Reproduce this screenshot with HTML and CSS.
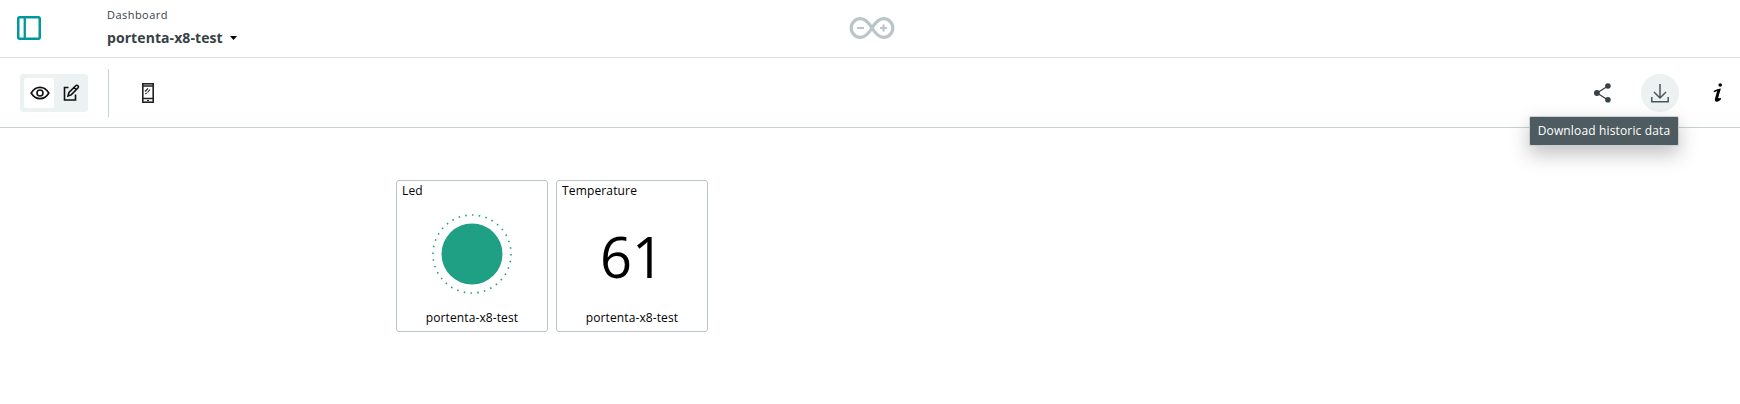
FILE: index.html
```html
<!DOCTYPE html>
<html lang="en">
<head>
<meta charset="utf-8">
<title>portenta-x8-test</title>
<link rel="stylesheet" href="styles.css">
</head>
<body>
<header class="header">
  <div class="header-left">
    <svg class="menu-icon" width="24" height="24" viewBox="0 0 24 24" fill="none" stroke="#00979d"><rect x="1.250" y="1.250" width="21.500" height="21.500" rx="1.500" stroke-width="2.500"/><path d="M7.750 2v20" stroke-width="2.300"/></svg>
    <div class="crumbs">
      <span class="crumb">Dashboard</span>
      <div class="title"><span>portenta-x8-test</span><svg width="7" height="4" viewBox="0 0 7 4"><path d="M0 0h7L3.500 4z"/></svg></div>
    </div>
  </div>
  <svg class="logo" width="46" height="22" viewBox="0 0 46 22" fill="none" stroke="#b9c5c6" stroke-width="3.200"><path d="M23 11C19 4.500 15.500 1.700 11.500 1.700a9.300 9.300 0 0 0 0 18.600C15.500 20.300 19 17.500 23 11S30.500 1.700 34.500 1.700a9.300 9.300 0 0 1 0 18.600C30.500 20.300 27 17.500 23 11z"/><path d="M8 11h7M31 11h7M34.500 7.500v7" stroke-width="2.200"/></svg>
</header>
<nav class="toolbar">
  <div class="tools">
    <div class="modes">
      <span class="mode mode-active"><svg width="20" height="16" viewBox="0 0 20 16" fill="none" stroke="#111" stroke-width="1.600"><path d="M1.200 8C3.500 4 6.500 2.400 10 2.400S16.500 4 18.800 8C16.500 12 13.500 13.600 10 13.600S3.500 12 1.200 8z"/><circle cx="10" cy="8" r="3"/></svg></span>
      <span class="mode"><svg width="18" height="18" viewBox="0 0 18 18" fill="none" stroke="#111" stroke-width="1.600"><path d="M6.500 3.500H2.500v12.500h11v-5.500"/><path d="M6 12l1-3.500 6.700-6.700c.7-.7 1.700-.6 2.200 0 .6.600.6 1.500 0 2.200L9.200 10.900zM12 3.500l2.300 2.300"/></svg></span>
    </div>
    <span class="divider"></span>
    <svg class="phone" width="12" height="20" viewBox="0 0 12 20" fill="none" stroke="#222"><rect x=".8" y=".8" width="10.400" height="18.400" stroke-width="1.600"/><path d="M1 3h10M1 15.400h10" stroke-width="1.500"/><path d="M3 8.500l3-3M3.500 11l1.200-1.200M5.500 9.500l2.500-3" stroke-width="1.100"/><path d="M5 17.500h2" stroke-width="1.200"/></svg>
  </div>
  <div class="actions">
    <svg class="share" width="18" height="20" viewBox="0 0 18 20" fill="#374146"><path d="M14 3L3 10l11 7" fill="none" stroke="#374146" stroke-width="1.300"/><circle cx="13.900" cy="3" r="2.800"/><circle cx="2.900" cy="10" r="2.900"/><circle cx="13.900" cy="16.800" r="2.800"/></svg>
    <div class="download">
      <svg width="18" height="20" viewBox="0 0 18 20" fill="none" stroke="#4b575b" stroke-width="1.500"><path d="M9 1v14M3 9l6 6 6-6M.8 14v4.700h16.400V14"/></svg>
      <span class="tooltip">Download historic data</span>
    </div>
    <svg class="info" width="10" height="20" viewBox="0 0 10 20"><circle cx="7.200" cy="2" r="1.800"/><path d="M1 8.800C2 7.600 4.500 7 6.800 6.500L4 15.500c-.4 1.500.6 1.700 3.800-.2" fill="none" stroke="#000" stroke-width="1.500"/><path d="M4.300 7.500L2 15.500c-.5 2 .2 3.200 1.700 3.200C5.300 18.700 7 17.500 8 16l-3-1L7 6.500z"/></svg>
  </div>
</nav>
<main class="board">
  <section class="card">
    <div class="name">Led</div>
    <div class="value led"><svg width="84" height="84" viewBox="-42 -42 84 84"><circle r="30.500" fill="#1fa085"/><circle r="39" fill="none" stroke="#1fa085" stroke-width="1.600" pathLength="360" stroke-dasharray="2.200 7.800"/></svg></div>
    <div class="thing">portenta-x8-test</div>
  </section>
  <section class="card">
    <div class="name">Temperature</div>
    <div class="value number">61</div>
    <div class="thing">portenta-x8-test</div>
  </section>
</main>
</body>
</html>
```
FILE: styles.css
```css
* { box-sizing: border-box; }
body { margin: 0; height: 404px; overflow: hidden; background: #fff; font-family: "Open Sans", sans-serif; color: #000; }
svg { display: block; flex: none; }
.header { height: 58px; border-bottom: 1px solid #dae3e3; display: grid; grid-template-columns: 849px 46px 1fr; }
.header-left { display: flex; padding-left: 17px; }
.menu-icon { margin-top: 16px; }
.crumbs { margin-left: 66px; padding-top: 7px; color: #374146; }
.crumb { display: block; font-size: 11px; line-height: 16px; letter-spacing: .45px; }
.title { display: flex; align-items: center; gap: 7px; margin-top: 5px; font-size: 14px; font-weight: 700; line-height: 20px; letter-spacing: .08px; color: #374146; }
.logo { margin-top: 16.500px; }
.toolbar { height: 70px; border-bottom: 1px solid #c9d2d2; display: flex; justify-content: space-between; }
.tools { display: flex; align-items: center; padding-left: 20px; }
.modes { display: flex; gap: 2px; width: 68px; height: 38px; padding: 4px; border-radius: 3px; background: #ecf1f1; }
.mode { display: flex; width: 30px; height: 30px; flex: none; align-items: center; justify-content: center; border-radius: 2px; }
.mode-active { background: #fff; padding-left: 2px; }
.divider { width: 1px; height: 48px; margin-left: 20px; background: #c9d2d2; }
.phone { margin-left: 33px; }
.actions { display: flex; align-items: center; padding-right: 17px; }
.download { position: relative; display: flex; width: 38px; height: 38px; margin-left: 29px; align-items: center; justify-content: center; border-radius: 50%; background: #ecf1f1; }
.info { margin-left: 34px; }
.tooltip { position: absolute; top: 42px; right: 0; width: 150px; height: 30px; border: 1px solid #c9d2d2; border-radius: 2px; background: #4e5b61; box-shadow: 0 8px 20px rgba(0, 0, 0, .25); color: #fff; font-size: 12px; line-height: 28px; text-align: center; white-space: nowrap; letter-spacing: .15px; }
.board { display: flex; gap: 8px; padding: 52px 0 0 396px; }
.card { display: flex; flex-direction: column; width: 152px; height: 152px; border: 1px solid #b9c5c6; border-radius: 3px; }
.name { padding-left: 5px; height: 20px; font-size: 12px; line-height: 20px; letter-spacing: .15px; }
.value { display: flex; height: 107px; align-items: center; justify-content: center; }
.led { padding-bottom: 1px; }
.number { padding-top: 3px; font-size: 56px; font-weight: 400; }
.thing { font-size: 12px; line-height: 20px; text-align: center; letter-spacing: .1px; }
```
